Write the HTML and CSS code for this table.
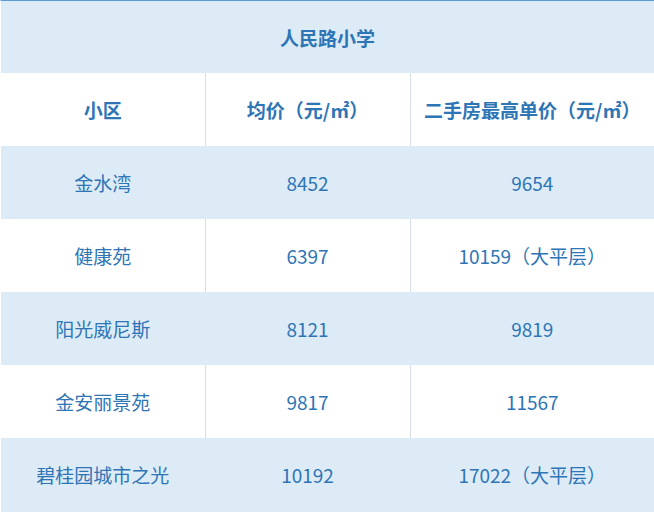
FILE: index.html
```html
<!DOCTYPE html>
<html lang="zh">
<head>
<meta charset="utf-8">
<link rel="stylesheet" href="styles.css">
</head>
<body>
<div class="wrap">
<table class="price">
  <colgroup><col class="c1"><col class="c2"><col class="c3"></colgroup>
  <tr class="title"><th colspan="3">人民路小学</th></tr>
  <tr class="head"><th>小区</th><th>均价（元/㎡）</th><th>二手房最高单价（元/㎡）</th></tr>
  <tr class="blue"><td>金水湾</td><td>8452</td><td>9654</td></tr>
  <tr class="white"><td>健康苑</td><td>6397</td><td>10159（大平层）</td></tr>
  <tr class="blue"><td>阳光威尼斯</td><td>8121</td><td>9819</td></tr>
  <tr class="white"><td>金安丽景苑</td><td>9817</td><td>11567</td></tr>
  <tr class="blue"><td>碧桂园城市之光</td><td>10192</td><td>17022（大平层）</td></tr>
</table>
</div>
</body>
</html>
```
FILE: styles.css
```css
html, body {
  margin: 0;
  padding: 0;
  background: #ffffff;
}
.wrap {
  width: 653px;
  height: 511px;
  overflow: hidden;
  border-top: 1px solid #5b9bd5;
  border-left: 1px solid #ffffff;
  background: #ddebf7;
}
.price {
  border-collapse: collapse;
  table-layout: fixed;
  width: 653px;
  font-family: "Noto Sans CJK SC", "Microsoft YaHei", sans-serif;
  font-size: 19px;
  color: #2e75b6;
}
.c1 { width: 204px; }
.c2 { width: 205px; }
.c3 { width: 244px; }
.price th, .price td {
  padding: 0;
  text-align: center;
  vertical-align: middle;
  height: 73px;
}
.price th {
  font-weight: bold;
}
.title th {
  height: 72px;
  background: #ddebf7;
}
.head th, .white td {
  background: #ffffff;
}
.head th + th, .white td + td {
  border-left: 1px solid #d6dfe9;
}
.blue td {
  background: #ddebf7;
}
.blue td + td {
  border-left: 1px solid #ddebf7;
}
```
